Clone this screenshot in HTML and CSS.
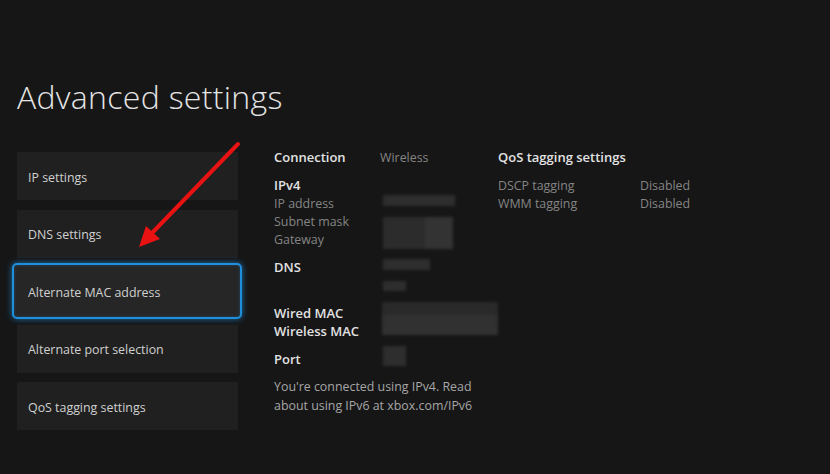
FILE: index.html
```html
<!DOCTYPE html>
<html lang="en">
<head>
    <meta charset="UTF-8">
    <meta name="viewport" content="width=device-width, initial-scale=1.0">
    <title>Advanced settings</title>
    <link rel="stylesheet" href="styles.css">
</head>
<body>
    <div class="page">
        <h1 class="titulo">Advanced settings</h1>
        <div class="main">
            <div class="menu">
                <div class="tile">IP settings</div>
                <div class="tile">DNS settings</div>
                <div class="tile activo">Alternate MAC address</div>
                <div class="tile">Alternate port selection</div>
                <div class="tile">QoS tagging settings</div>
            </div>
            <div class="info">
                <div class="grupo">
                    <div class="fila"><span class="fuerte">Connection</span><span class="valor">Wireless</span></div>
                </div>
                <div class="grupo">
                    <div class="fila"><span class="fuerte">IPv4</span></div>
                    <div class="fila"><span class="etq">IP address</span><span class="blur b-ip"></span></div>
                    <div class="fila"><span class="etq">Subnet mask</span><span class="blur b-mask"></span></div>
                    <div class="fila"><span class="etq">Gateway</span></div>
                </div>
                <div class="grupo">
                    <div class="fila"><span class="fuerte">DNS</span><span class="blur b-dns1"></span></div>
                    <div class="fila"><span class="etq"></span><span class="blur b-dns2"></span></div>
                </div>
                <div class="grupo">
                    <div class="fila"><span class="fuerte">Wired MAC</span><span class="blur b-mac"></span></div>
                    <div class="fila"><span class="fuerte">Wireless MAC</span></div>
                </div>
                <div class="grupo">
                    <div class="fila"><span class="fuerte">Port</span><span class="blur b-port"></span></div>
                </div>
                <p class="nota">You're connected using IPv4. Read<br>about using IPv6 at xbox.com/IPv6</p>
            </div>
            <div class="qos">
                <div class="grupo">
                    <div class="fila"><span class="fuerte">QoS tagging settings</span></div>
                </div>
                <div class="grupo">
                    <div class="fila"><span class="etq ancha">DSCP tagging</span><span class="valor">Disabled</span></div>
                    <div class="fila"><span class="etq ancha">WMM tagging</span><span class="valor">Disabled</span></div>
                </div>
            </div>
        </div>
    </div>
    <!-- flecha roja de anotacion -->
    <svg class="flecha" width="830" height="474" viewBox="0 0 830 474">
        <line x1="238" y1="144" x2="153" y2="232" stroke="#e81212" stroke-width="4" stroke-linecap="round"/>
        <polygon points="139,247 146,226 160,239" fill="#e81212"/>
    </svg>
</body>
</html>
```

FILE: styles.css
```css
body {
    margin: 0;
    padding: 0;
    background-color: #161616;
    font-family: "Open Sans", "DejaVu Sans", sans-serif;
    font-size: 12.4px;
    color: #d2d2d2;
    width: 830px;
    height: 474px;
    overflow: hidden;
}

.page {
    padding: 77px 0 0 17px;
}

.titulo {
    margin: 0;
    font-size: 32px;
    font-weight: 300;
    line-height: 40px;
    color: #e4e4e4;
    letter-spacing: 0.3px;
}

.main {
    display: flex;
    margin-top: 31px;
}

.menu {
    display: flex;
    flex-direction: column;
    gap: 9.5px;
    width: 221px;
    padding-top: 4px;
}

.tile {
    height: 48px;
    display: flex;
    align-items: center;
    padding: 2px 0 0 11px;
    background-color: #202020;
    color: #d0d0d0;
    box-sizing: border-box;
}

.tile.activo {
    height: 56px;
    margin: -4px -4px -4px -5px;
    padding-left: 14px;
    background-color: #262626;
    border: 2px solid #1f8fdc;
    border-radius: 5px;
    box-shadow: 0 0 6px rgba(30, 140, 220, 0.75), inset 0 0 3px rgba(30, 140, 220, 0.4);
}

.info {
    margin-left: 36px;
    width: 224px;
}

.qos {
    width: 220px;
}

.grupo {
    margin-bottom: 10px;
}

.fila {
    display: flex;
    height: 18px;
    line-height: 18px;
    position: relative;
}

.fuerte {
    font-size: 13px;
    font-weight: 600;
    color: #e2e2e2;
    width: 106px;
    white-space: nowrap;
}

.etq {
    color: #858585;
    width: 109px;
    padding-top: 1px;
}

.etq.ancha {
    width: 142px;
}

.valor {
    color: #858585;
    padding-top: 1px;
}

.blur {
    display: block;
    background-color: #2e2e2e;
    filter: blur(1.5px);
}

.fuerte + .blur {
    margin-left: 3px;
}

.b-ip {
    width: 72px;
    height: 11px;
    margin-top: 1px;
}

.b-mask {
    width: 70px;
    height: 32px;
    margin-top: 5px;
    background: linear-gradient(90deg, #2c2c2c 60%, #333 60%);
}

.b-dns1 {
    width: 47px;
    height: 11px;
    margin-top: 1px;
}

.b-dns2 {
    width: 23px;
    height: 10px;
    margin-top: 5px;
}

.b-mac {
    width: 117px;
    height: 33px;
    margin-top: -2px;
    background: linear-gradient(180deg, #2a2a2a 40%, #313131 40%);
}

.b-port {
    width: 23px;
    height: 20px;
    margin-top: -4px;
}

.nota {
    margin: -1px 0 0 0;
    line-height: 19px;
    color: #a6a6a6;
}

.flecha {
    position: absolute;
    left: 0;
    top: 0;
    pointer-events: none;
}
```
